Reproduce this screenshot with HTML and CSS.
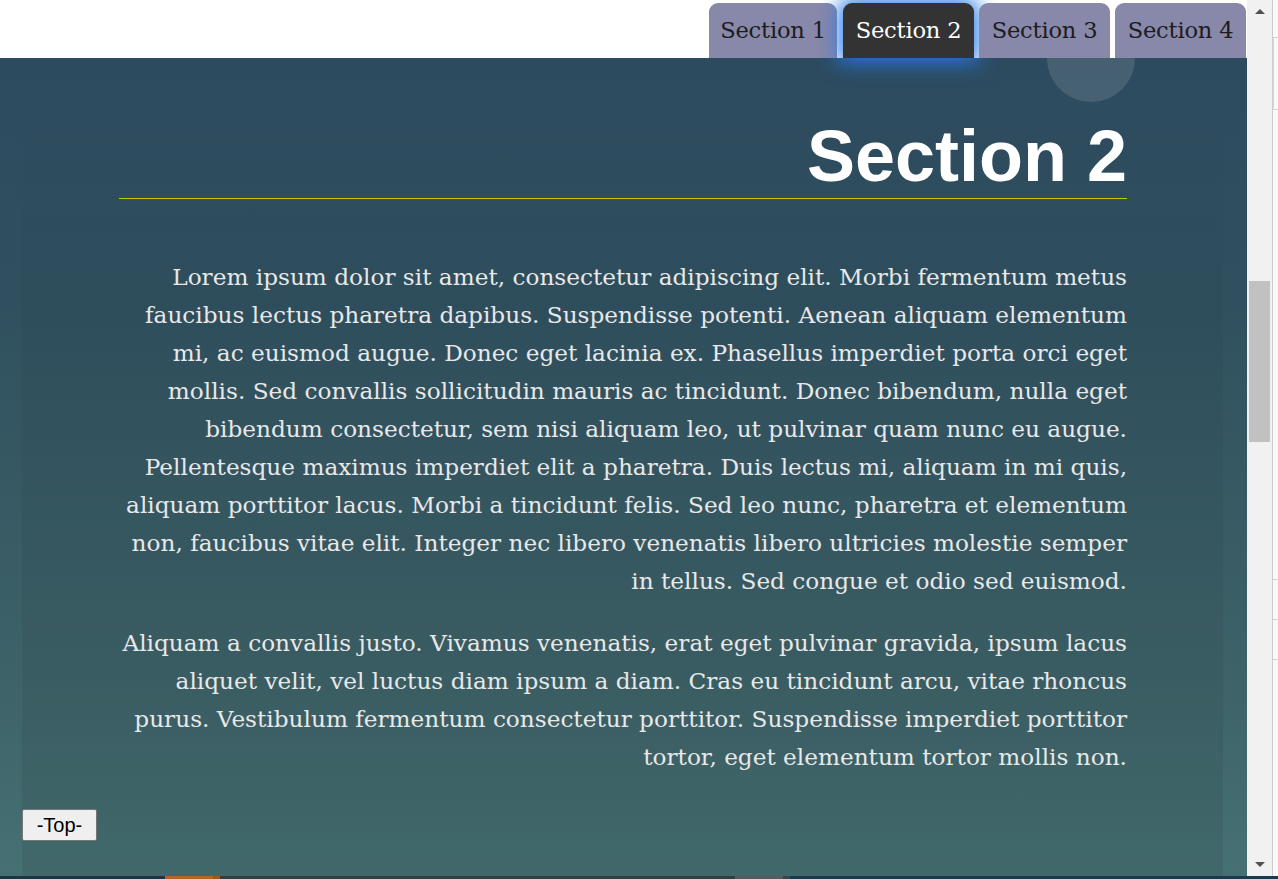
FILE: index.html
```html
<!DOCTYPE html>
<html lang="en">
<head>
<meta charset="utf-8">
<title>Section 2</title>
<link rel="stylesheet" href="styles.css">
</head>
<body>
<div class="app">
  <div class="viewport">
    <div class="page">
      <header class="tabs">
        <a class="tab tab-first">Section 1</a>
        <a class="tab active">Section 2</a>
        <a class="tab">Section 3</a>
        <a class="tab">Section 4</a>
      </header>
      <main class="stage">
        <div class="circle"></div>
        <section class="panel">
          <h1 class="title">Section 2</h1>
          <div class="rule"></div>
          <p class="para">Lorem ipsum dolor sit amet, consectetur adipiscing elit. Morbi fermentum metus<br>faucibus lectus pharetra dapibus. Suspendisse potenti. Aenean aliquam elementum<br>mi, ac euismod augue. Donec eget lacinia ex. Phasellus imperdiet porta orci eget<br>mollis. Sed convallis sollicitudin mauris ac tincidunt. Donec bibendum, nulla eget<br>bibendum consectetur, sem nisi aliquam leo, ut pulvinar quam nunc eu augue.<br>Pellentesque maximus imperdiet elit a pharetra. Duis lectus mi, aliquam in mi quis,<br>aliquam porttitor lacus. Morbi a tincidunt felis. Sed leo nunc, pharetra et elementum<br>non, faucibus vitae elit. Integer nec libero venenatis libero ultricies molestie semper<br>in tellus. Sed congue et odio sed euismod.</p>
          <p class="para">Aliquam a convallis justo. Vivamus venenatis, erat eget pulvinar gravida, ipsum lacus<br>aliquet velit, vel luctus diam ipsum a diam. Cras eu tincidunt arcu, vitae rhoncus<br>purus. Vestibulum fermentum consectetur porttitor. Suspendisse imperdiet porttitor<br>tortor, eget elementum tortor mollis non.</p>
          <button class="top-btn" type="button">-Top-</button>
        </section>
      </main>
    </div>
    <div class="scrollbar">
      <div class="arrow arrow-up"></div>
      <div class="track">
        <div class="thumb"></div>
      </div>
      <div class="arrow arrow-down"></div>
    </div>
    <div class="edge">
      <div class="edge-seg seg-a"></div>
      <div class="edge-seg seg-b"></div>
      <div class="edge-seg seg-c"></div>
      <div class="edge-seg seg-d"></div>
      <div class="edge-seg seg-e"></div>
    </div>
  </div>
  <div class="taskbar">
    <div class="tb tb-dark1"></div>
    <div class="tb tb-orange"></div>
    <div class="tb tb-orange2"></div>
    <div class="tb tb-dark2"></div>
    <div class="tb tb-gray"></div>
    <div class="tb tb-gray2"></div>
    <div class="tb tb-dark3"></div>
  </div>
</div>
</body>
</html>
```
FILE: styles.css
```css
* { box-sizing: border-box; }
html, body { margin: 0; padding: 0; }
body {
  width: 1278px;
  height: 879px;
  overflow: hidden;
  background: #ffffff;
  font-family: "DejaVu Serif", "Liberation Serif", serif;
}
.app {
  display: flex;
  flex-direction: column;
  width: 1278px;
  height: 879px;
}
.viewport {
  display: flex;
  height: 876px;
}
.page {
  width: 1247px;
  display: flex;
  flex-direction: column;
}
.tabs {
  position: relative;
  z-index: 2;
  height: 58px;
  background: #ffffff;
  display: flex;
  justify-content: flex-end;
  align-items: flex-end;
  gap: 5px;
  padding-right: 1px;
}
.tab {
  width: 131px;
  height: 55px;
  display: flex;
  align-items: center;
  justify-content: center;
  padding-bottom: 2px;
  background: #8888aa;
  color: #1c1c1c;
  font-family: "DejaVu Serif", serif;
  font-size: 22.6px;
  border-radius: 9px 9px 0 0;
  cursor: pointer;
  letter-spacing: -0.2px;
}
.tab-first { width: 128px; margin-right: 1px; }
.tab.active {
  background: #333333;
  color: #ffffff;
  box-shadow: 0 0 20px 5px rgba(35, 120, 230, 0.95);
}
.stage {
  position: relative;
  flex: 1;
  overflow: hidden;
  background: linear-gradient(180deg, #2d4b5f 0%, #30505f 30%, #3d6268 75%, #467174 100%);
  display: flex;
}
.circle {
  position: absolute;
  left: 1047px;
  top: -44px;
  width: 88px;
  height: 88px;
  border-radius: 50%;
  background: rgba(255, 255, 255, 0.12);
}
.panel {
  flex: 1;
  margin: 0 24px 0 22px;
  padding: 57px 96px 0 97px;
  background: linear-gradient(180deg, rgba(0,0,0,0.0) 0%, rgba(0,0,0,0.03) 30%, rgba(0,0,0,0.08) 100%);
}
.title {
  margin: 0;
  height: 83px;
  font-family: "Liberation Sans", Arial, sans-serif;
  font-weight: bold;
  font-size: 72px;
  line-height: 83px;
  color: #ffffff;
  text-align: right;
}
.rule {
  height: 1px;
  background: #c8c800;
}
.para {
  margin: 24px 0 0;
  font-size: 23.2px;
  line-height: 38px;
  color: #e8e8e8;
  text-align: right;
  white-space: nowrap;
}
.rule + .para {
  margin-top: 59px;
}
.top-btn {
  display: block;
  margin: 33px 0 0 -97px;
  width: 75px;
  height: 32px;
  padding: 0;
  background: #efefef;
  border: 1px solid #767676;
  border-radius: 2px;
  color: #000000;
  font-family: "Liberation Sans", Arial, sans-serif;
  font-size: 20px;
}
.scrollbar {
  width: 25px;
  background: #f1f1f1;
  display: flex;
  flex-direction: column;
  align-items: center;
}
.arrow {
  width: 0;
  height: 0;
  border-left: 5px solid transparent;
  border-right: 5px solid transparent;
}
.arrow-up {
  margin-top: 9px;
  border-bottom: 5px solid #505050;
}
.arrow-down {
  margin-bottom: 9px;
  border-top: 5px solid #505050;
}
.track {
  flex: 1;
  width: 100%;
  padding: 267px 2px 0;
}
.thumb {
  height: 161px;
  background: #c1c1c1;
}
.edge {
  width: 6px;
  border-left: 1px solid #cccccc;
  background: #f9f9f9;
  display: flex;
  flex-direction: column;
}
.edge-seg { border-bottom: 1px solid #d4d4d4; }
.seg-a { height: 38px; }
.seg-b { height: 72px; border-left: 1px solid #d8d8d8; }
.seg-c { height: 470px; }
.seg-d { height: 40px; }
.seg-e { height: 40px; }
.taskbar {
  height: 3px;
  display: flex;
}
.tb { height: 3px; }
.tb-dark1 { width: 165px; background: #1f3441; }
.tb-orange { width: 48px; background: #b5652a; }
.tb-orange2 { width: 7px; background: #9a5825; }
.tb-dark2 { width: 515px; background: #363d3f; }
.tb-gray { width: 48px; background: #5a5a5a; }
.tb-gray2 { width: 7px; background: #3e4446; }
.tb-dark3 { flex: 1; background: #1e3a4a; }
```
